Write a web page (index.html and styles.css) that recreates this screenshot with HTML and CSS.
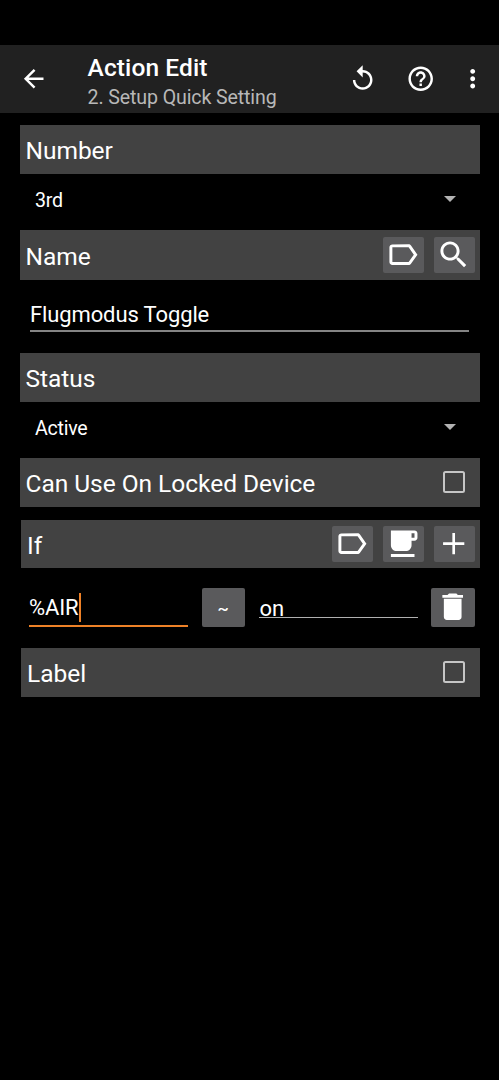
FILE: index.html
```
<!DOCTYPE html>
<html lang="en">
<head>
<meta charset="utf-8">
<title>Action Edit</title>
<link rel="stylesheet" href="styles.css">
</head>
<body>
<svg class="defs" aria-hidden="true">
  <symbol id="tag" viewBox="0 0 24 24"><path d="M17.63 5.84C17.27 5.33 16.67 5 16 5L5 5.01C3.9 5.01 3 5.9 3 7v10c0 1.1.9 1.99 2 1.99L16 19c.67 0 1.27-.33 1.63-.84L22 12l-4.37-6.16zM16 17H5V7h11l3.55 5L16 17z"/></symbol>
</svg>
<header class="toolbar">
  <svg class="icon back" viewBox="0 0 24 24"><path d="M20 11H7.83l5.59-5.59L12 4l-8 8 8 8 1.41-1.41L7.83 13H20v-2z"/></svg>
  <div class="titles">
    <h1 class="title">Action Edit</h1>
    <div class="subtitle">2. Setup Quick Setting</div>
  </div>
  <div class="actions">
    <svg class="icon" viewBox="0 0 24 24"><path d="M12 5V1L7 6l5 5V7c3.31 0 6 2.69 6 6s-2.69 6-6 6-6-2.69-6-6H4c0 4.42 3.58 8 8 8s8-3.58 8-8-3.58-8-8-8z"/></svg>
    <svg class="icon" viewBox="0 0 24 24"><path d="M11 18h2v-2h-2v2zm1-16C6.48 2 2 6.48 2 12s4.48 10 10 10 10-4.48 10-10S17.52 2 12 2zm0 18c-4.41 0-8-3.59-8-8s3.59-8 8-8 8 3.59 8 8-3.59 8-8 8zm0-14c-2.21 0-4 1.79-4 4h2c0-1.1.9-2 2-2s2 .9 2 2c0 2-3 1.75-3 5h2c0-2.25 3-2.5 3-5 0-2.21-1.79-4-4-4z"/></svg>
    <svg class="icon more" viewBox="0 0 24 24"><path d="M12 8c1.1 0 2-.9 2-2s-.9-2-2-2-2 .9-2 2 .9 2 2 2zm0 2c-1.1 0-2 .9-2 2s.9 2 2 2 2-.9 2-2-.9-2-2-2zm0 6c-1.1 0-2 .9-2 2s.9 2 2 2 2-.9 2-2-.9-2-2-2z"/></svg>
  </div>
</header>
<main class="form">
  <section class="bar"><h2 class="heading">Number</h2></section>
  <div class="select"><span class="value">3rd</span><span class="caret"></span></div>
  <section class="bar bar-name">
    <h2 class="heading">Name</h2>
    <div class="buttons">
      <button class="btn"><svg class="glyph"><use href="#tag"/></svg></button>
      <button class="btn"><svg class="glyph" viewBox="0 0 24 24"><path d="M15.5 14h-.79l-.28-.27C15.41 12.59 16 11.11 16 9.5 16 5.91 13.09 3 9.5 3S3 5.91 3 9.5 5.91 16 9.5 16c1.61 0 3.09-.59 4.23-1.57l.27.28v.79l5 4.99L20.49 19l-4.99-5zm-6 0C7.01 14 5 11.99 5 9.5S7.01 5 9.5 5 14 7.01 14 9.5 11.99 14 9.5 14z"/></svg></button>
    </div>
  </section>
  <div class="field"><span class="text name-text">Flugmodus Toggle</span></div>
  <section class="bar"><h2 class="heading">Status</h2></section>
  <div class="select"><span class="value">Active</span><span class="caret"></span></div>
  <section class="bar"><h2 class="heading">Can Use On Locked Device</h2><span class="checkbox"></span></section>
  <section class="bar bar-inset bar-if">
    <h2 class="heading">If</h2>
    <div class="buttons">
      <button class="btn"><svg class="glyph"><use href="#tag"/></svg></button>
      <button class="btn"><svg class="glyph" viewBox="0 0 24 24"><path d="M20 3H4v10c0 2.210 1.790 4 4 4h6c2.210 0 4-1.790 4-4v-3h2c1.110 0 2-.9 2-2V5c0-1.110-.89-2-2-2zm0 5h-2V5h2v3zM4 19h16v2H4z"/></svg></button>
      <button class="btn"><svg class="glyph" viewBox="0 0 24 24"><path d="M19.200 12.900h-6.300v6.300h-1.800v-6.300H4.800v-1.800h6.300V4.800h1.800v6.300h6.300z"/></svg></button>
    </div>
  </section>
  <div class="condition">
    <div class="input focused"><span class="text">%AIR</span><span class="cursor"></span></div>
    <button class="btn btn-large">~</button>
    <div class="input"><span class="text">on</span></div>
    <button class="btn btn-large"><svg class="glyph trash" viewBox="0 0 24 24"><path d="M6 19c0 1.100.9 2 2 2h8c1.100 0 2-.9 2-2V6.600H6V19zM19 4h-3.500l-1-1h-5l-1 1H5v2h14V4z"/></svg></button>
  </div>
  <section class="bar bar-inset"><h2 class="heading">Label</h2><span class="checkbox"></span></section>
</main>
</body>
</html>
```
FILE: styles.css
```
* { box-sizing: border-box; }
body {
  margin: 0;
  padding-top: 45px;
  min-height: 1080px;
  background: #000;
  color: #fff;
  font-family: Roboto, sans-serif;
}
svg { fill: currentColor; display: block; flex: none; }
.defs { display: none; }
h1, h2 { margin: 0; }
.toolbar {
  display: flex;
  height: 68px;
  padding: 0 12px 0 19px;
  align-items: center;
  background: #212121;
}
.icon { width: 29.4px; height: 29.4px; }
.titles { margin-left: 39.2px; padding-top: 6px; white-space: nowrap; }
.title { font-size: 24.5px; line-height: 30px; font-weight: 500; letter-spacing: .1px; }
.subtitle { font-size: 19.6px; line-height: 29px; color: #b8b8b8; letter-spacing: -.12px; }
.actions { display: flex; margin-left: auto; }
.actions .icon + .icon { margin-left: 28.7px; }
.actions .icon.more { margin-left: 22px; }
.form { padding: 12px 19.5px 0; }
.bar {
  display: flex;
  height: 48.5px;
  align-items: center;
  justify-content: space-between;
  padding: 0 5px 0 6px;
  background: #424242;
}
.bar-name { height: 50px; }
.bar-inset { margin-left: 1.5px; }
.bar-if { margin-top: 13.5px; height: 48px; }
.heading { font-size: 24.5px; font-weight: 400; line-height: 30px; padding-top: 3px; letter-spacing: -.03px; }
.select {
  display: flex;
  height: 56.5px;
  padding: 0 23.5px 5px 15.5px;
  align-items: center;
  justify-content: space-between;
}
.value { font-size: 19.6px; letter-spacing: -.25px; padding-top: 2px; }
.caret { border: 6px solid transparent; border-top-color: #b3b3b3; border-bottom: 0; }
.buttons { display: flex; gap: 10px; }
.btn {
  display: flex;
  width: 41px;
  height: 36px;
  padding: 0;
  align-items: center;
  justify-content: center;
  border: 0;
  border-radius: 2px;
  background: #5a5a5c;
  color: #fff;
  font: 500 17px Roboto, sans-serif;
}
.glyph { width: 35.4px; height: 35.4px; }
.trash { margin-bottom: 1px; }
.field {
  height: 52px;
  margin: 0 10.5px 21px;
  padding-top: 20px;
  border-bottom: 2px solid #848484;
}
.text { font-size: 22px; line-height: 30px; letter-spacing: -.12px; }
.checkbox {
  width: 22px;
  height: 22px;
  margin: 0 10px 1px 0;
  border: 2px solid #c6c6c6;
  border-radius: 2.5px;
}
.condition {
  display: flex;
  height: 80px;
  padding: 20px 5px 21px 9.5px;
  justify-content: space-between;
}
.input { display: flex; width: 159px; height: 30px; padding: 6px 0 0 1px; border-bottom: 1px solid #b0b0b0; }
.focused { height: 38.5px; padding: 5px 0 0; border-bottom: 2px solid #ee8127; }
.cursor { width: 2px; height: 29px; background: #ee8127; }
.btn-large { width: 43.5px; height: 39px; }
```
